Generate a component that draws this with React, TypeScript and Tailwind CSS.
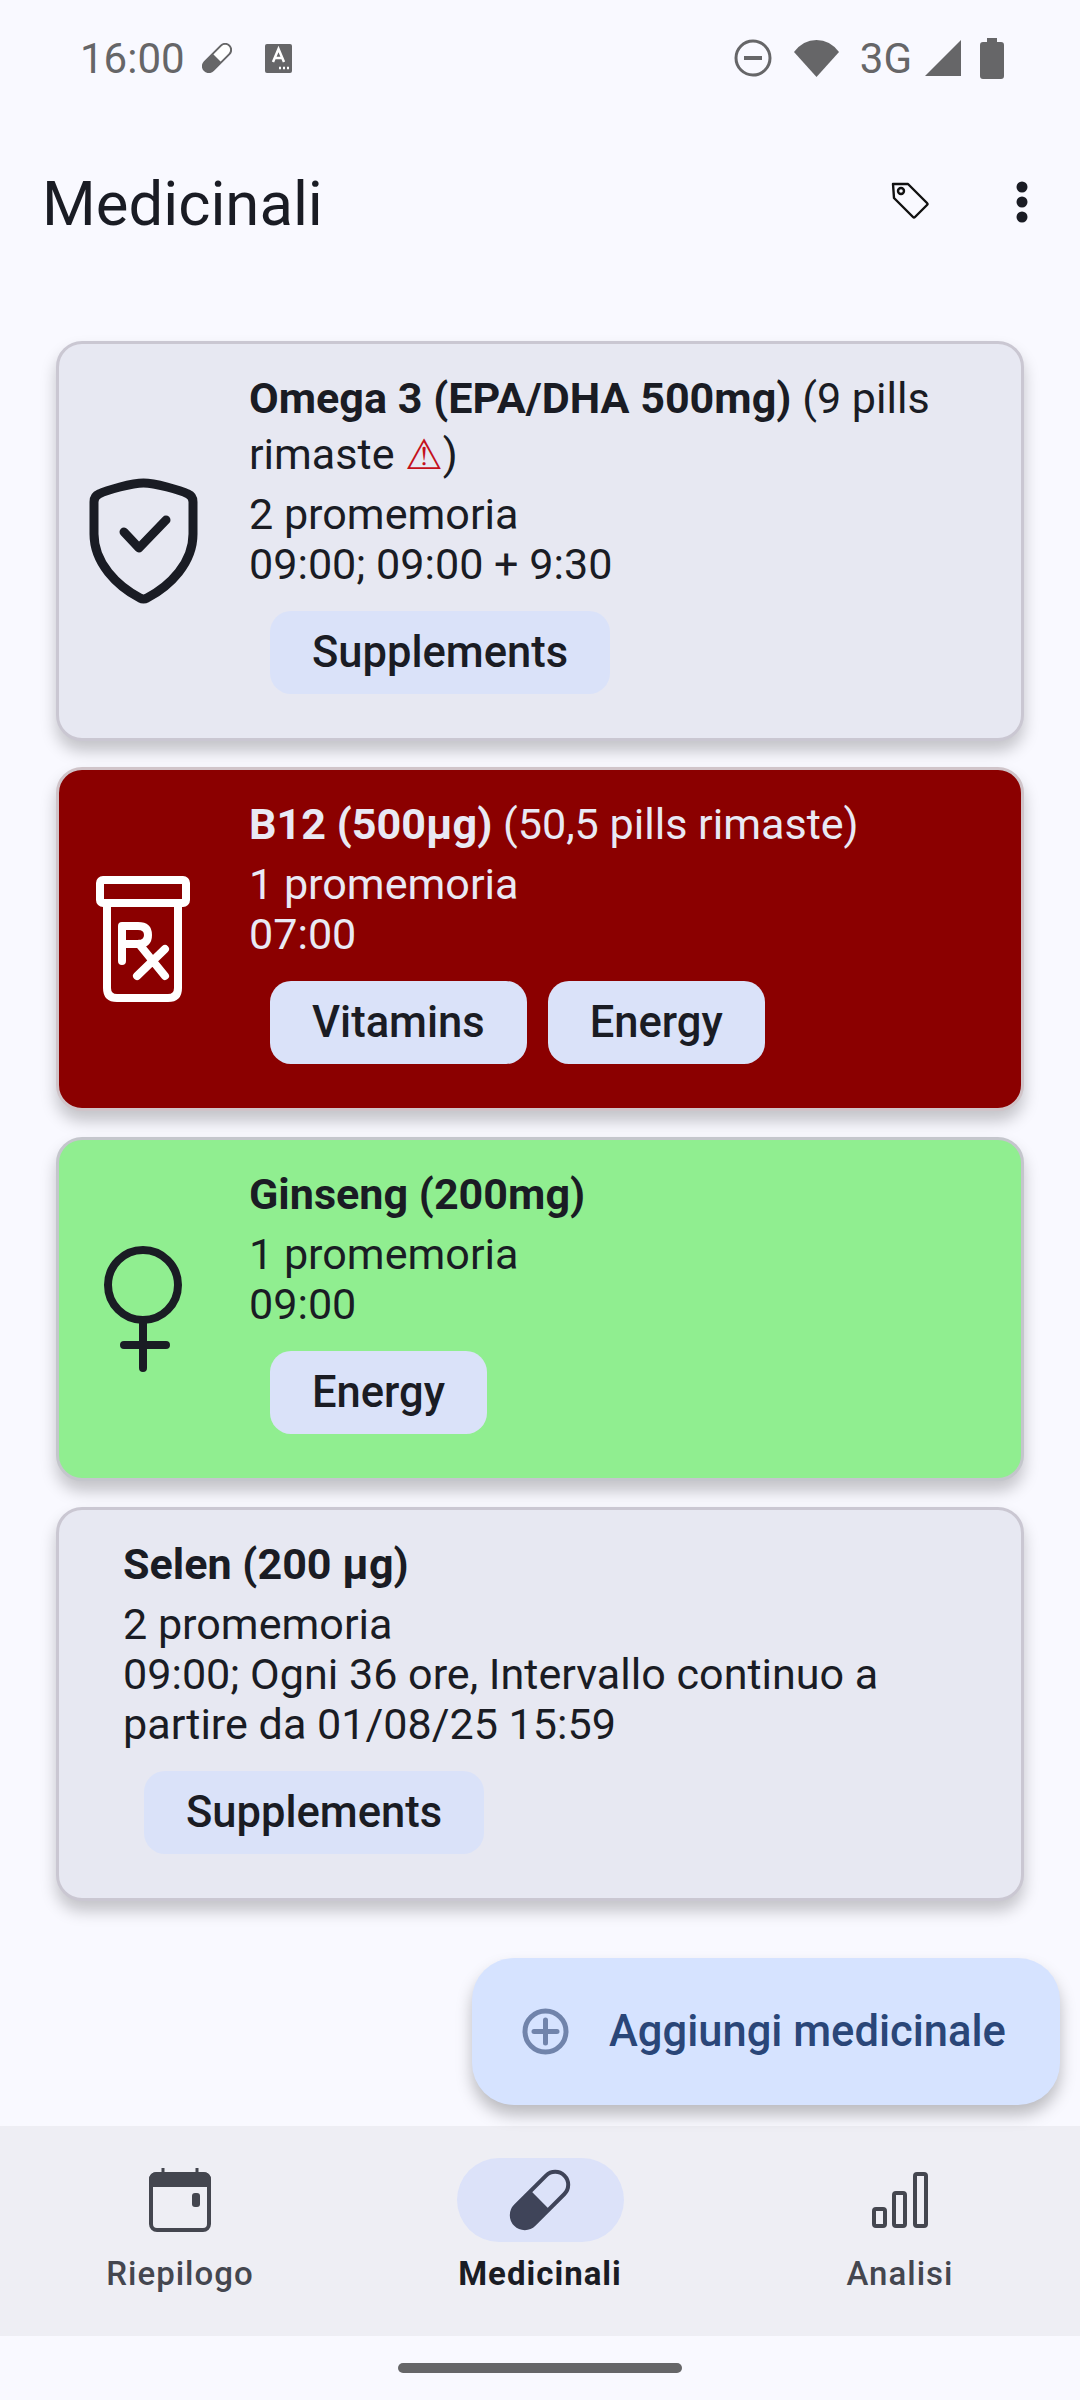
import React from "react";

const Shield = () => (
  <svg width="126" height="126" viewBox="0 0 126 126" fill="none" stroke="#1a1c24" strokeWidth="9" strokeLinecap="round" strokeLinejoin="round">
    <path d="M63.5 5C75 5 100 12 108 16Q113 18 113 24V56C113 85 90 108 67 120Q63.5 122 60 120C37 108 14 85 14 56V24Q14 18 19 16C27 12 52 5 63.5 5Z" />
    <path d="M44 54L59 70L86 42" />
  </svg>
);
const Rx = () => (
  <svg width="126" height="126" viewBox="0 0 126 126" fill="none" stroke="#ffffff" strokeWidth="8" strokeLinecap="round" strokeLinejoin="round">
    <rect x="20" y="4" width="86" height="23" rx="3" />
    <path d="M27 27V112Q27 122 37 122H88Q98 122 98 112V27" />
    <path d="M42 85V50H58Q68 50 68 59Q68 68 58 68H42" />
    <path d="M59 68L85 100M85 73L57 100" />
  </svg>
);
const Venus = () => (
  <svg width="126" height="126" viewBox="0 0 126 126" fill="none" stroke="#1a1c24" strokeWidth="8" strokeLinecap="round">
    <circle cx="63" cy="39" r="35" />
    <path d="M63 74V122M44 99H86" />
  </svg>
);

const Chip = ({ label }: { label: string }) => (
  <span className="flex h-[83px] items-center rounded-[21px] bg-[#dae2f9] px-[42px] text-[43.5px] font-medium text-[#1a1c24]">{label}</span>
);

type CardProps = {
  icon?: React.ReactNode;
  bg: string;
  title: string;
  extra?: React.ReactNode;
  lines: string[];
  chips: string[];
};

function Card({ icon, bg, title, extra, lines, chips }: CardProps) {
  return (
    <div className={`flex items-center rounded-[26px] border-[3px] shadow-[0_10px_16px_rgba(0,0,0,0.22)] ${bg} ${icon ? "pl-[21px]" : "pl-[64px]"} pr-[24px] pt-[27px] pb-[44px]`}>
      {icon && <div className="mt-[16px] mr-[43px] flex w-[126px] shrink-0 justify-center">{icon}</div>}
      <div className="min-w-0 flex-1">
        <div className="text-[43.1px] leading-[56px]">
          <span className="font-bold">{title}</span>
          {extra}
        </div>
        <div className="mt-[7px] text-[43.1px] leading-[50px] font-normal">
          {lines.map((l) => (
            <div key={l}>{l}</div>
          ))}
        </div>
        <div className="mt-[21px] ml-[21px] flex gap-[21px]">
          {chips.map((c) => (
            <Chip key={c} label={c} />
          ))}
        </div>
      </div>
    </div>
  );
}

export default function App() {
  return (
    <div className="relative flex h-[2400px] w-[1080px] flex-col overflow-hidden bg-[#f9f9ff] font-['Roboto',sans-serif] text-[#1a1c24]">
      {/* status bar */}
      <div className="flex h-[116px] shrink-0 items-center pr-[76px] pl-[80px] text-[#666668]">
        <span className="mt-[2px] text-[42px] leading-none">16:00</span>
        <svg className="ml-[17px]" width="30" height="30" viewBox="0 0 30 30">
          <g transform="rotate(45 15 15)">
            <rect x="9" y="-2.5" width="12" height="35" rx="6" fill="#fff" stroke="#666668" strokeWidth="2" />
            <path d="M9 15H21V26.5A6 6 0 0 1 9 26.5Z" fill="#666668" />
          </g>
        </svg>
        <svg className="ml-[33px]" width="27" height="29" viewBox="0 0 27 29">
          <rect width="27" height="29" rx="2" fill="#666668" />
          <path d="M8 18L13.5 5L19 18M10 14H17" stroke="#fff" strokeWidth="2.5" fill="none" />
          <path d="M14 24H16M18 24H20M22 24H24" stroke="#fff" strokeWidth="2.5" />
        </svg>
        <div className="flex-1" />
        <svg width="38" height="38" viewBox="0 0 38 38" fill="none" stroke="#666668" strokeWidth="3">
          <circle cx="19" cy="19" r="17" />
          <path d="M10 19H28" strokeWidth="4" />
        </svg>
        <svg className="ml-[21px]" width="47" height="38" viewBox="0 0 47 38">
          <path d="M23.5 38L1 13Q10 1 23.5 1Q37 1 46 13Z" fill="#666668" />
        </svg>
        <span className="mt-[2px] ml-[20px] text-[42px] leading-none">3G</span>
        <svg className="ml-[12px]" width="38" height="38" viewBox="0 0 38 38">
          <path d="M37 1V37H1Z" fill="#666668" />
        </svg>
        <svg className="ml-[18px]" width="24" height="41" viewBox="0 0 24 41">
          <path d="M7 0H17V4H21Q24 4 24 7V38Q24 41 21 41H3Q0 41 0 38V7Q0 4 3 4H7Z" fill="#666668" />
        </svg>
      </div>

      {/* header */}
      <div className="flex h-[174px] shrink-0 items-center pr-[52px] pl-[42px]">
        <h1 className="mt-[4px] flex-1 text-[61.6px] leading-none font-normal text-[#1a1c24]">Medicinali</h1>
        <svg className="mr-[87px] mb-[6px]" width="38" height="38" viewBox="0 0 38 38" fill="none" stroke="#111" strokeWidth="2.4" strokeLinejoin="round">
          <path d="M2 3H17L36 22Q37 23 36 24L24 36Q23 37 22 36L3 17Z" />
          <circle cx="10" cy="10" r="3" />
        </svg>
        <svg width="12" height="42" viewBox="0 0 12 42" fill="#1a1c24" className="mb-[3px]">
          <circle cx="6" cy="6" r="5.5" />
          <circle cx="6" cy="21" r="5.5" />
          <circle cx="6" cy="36" r="5.5" />
        </svg>
      </div>

      {/* list */}
      <div className="flex flex-1 flex-col gap-[26px] px-[56px] pt-[51px]">
        <Card
          bg="border-[#cac7d2] bg-[#e7e8f2]"
          icon={<Shield />}
          title="Omega 3 (EPA/DHA 500mg)"
          extra={
            <span>
              {" "}(9 pills rimaste <span className="text-[#c4101c] font-['DejaVu_Sans',sans-serif] text-[42px]">⚠</span>)
            </span>
          }
          lines={["2 promemoria", "09:00; 09:00 + 9:30"]}
          chips={["Supplements"]}
        />
        <Card
          bg="border-[#d0c4c9] bg-[#8b0000] text-[#e9e9f4]"
          icon={<Rx />}
          title="B12 (500µg)"
          extra={<span> (50,5 pills rimaste)</span>}
          lines={["1 promemoria", "07:00"]}
          chips={["Vitamins", "Energy"]}
        />
        <Card
          bg="border-[#c4c6cc] bg-[#90ee90]"
          icon={<Venus />}
          title="Ginseng (200mg)"
          lines={["1 promemoria", "09:00"]}
          chips={["Energy"]}
        />
        <Card
          bg="border-[#cac7d2] bg-[#e7e8f2]"
          title="Selen (200 µg)"
          lines={["2 promemoria", "09:00; Ogni 36 ore, Intervallo continuo a partire da 01/08/25 15:59"]}
          chips={["Supplements"]}
        />
      </div>

      {/* FAB */}
      <div className="absolute top-[1958px] left-[472px] flex h-[147px] w-[588px] items-center rounded-[42px] bg-[#d6e3ff] pl-[50px] text-[#2a4678] shadow-[0_10px_16px_rgba(0,0,0,0.25)]">
        <svg width="47" height="47" viewBox="0 0 47 47" fill="none" stroke="#7184ab" strokeWidth="5">
          <circle cx="23.5" cy="23.5" r="20.5" />
          <path d="M23.5 12V35M12 23.5H35" strokeLinecap="round" />
        </svg>
        <span className="ml-[40px] text-[43.5px] font-medium">Aggiungi medicinale</span>
      </div>

      {/* bottom nav */}
      <div className="grid h-[210px] shrink-0 grid-cols-3 bg-[#eeeef4] pt-[32px]">
        <div className="flex flex-col items-center">
          <div className="flex h-[84px] items-center justify-center">
            <svg width="62" height="64" viewBox="0 0 62 64" fill="none">
              <rect x="2" y="6" width="58" height="56" rx="6" stroke="#44464f" strokeWidth="4" />
              <path d="M2 12Q2 6 8 6H54Q60 6 60 12V17H2Z" fill="#44464f" stroke="#44464f" strokeWidth="4" />
              <path d="M14 0V6M48 0V6" stroke="#44464f" strokeWidth="3" />
              <rect x="43" y="25" width="8" height="14" rx="3" fill="#44464f" />
            </svg>
          </div>
          <span className="mt-[12px] text-[33px] leading-[40px] font-medium tracking-[1px] text-[#44464f]">Riepilogo</span>
        </div>
        <div className="flex flex-col items-center">
          <div className="flex h-[84px] w-[167px] items-center justify-center rounded-[42px] bg-[#dce2f9]">
            <svg width="62" height="62" viewBox="0 0 62 62">
              <g transform="rotate(45 31 31)">
                <rect x="18" y="-3.5" width="26" height="69" rx="13" fill="#dce2f9" stroke="#3f4459" strokeWidth="4" />
                <path d="M17 31H45V52.5A14 14 0 0 1 17 52.5Z" fill="#3f4459" />
              </g>
            </svg>
          </div>
          <span className="mt-[12px] text-[33px] leading-[40px] font-bold tracking-[1px] text-[#1a1c24]">Medicinali</span>
        </div>
        <div className="flex flex-col items-center">
          <div className="flex h-[84px] items-center justify-center">
            <svg width="56" height="56" viewBox="0 0 56 56" fill="none" stroke="#44464f" strokeWidth="4">
              <rect x="2" y="37" width="11" height="17" rx="2" />
              <rect x="22" y="21" width="11" height="33" rx="2" />
              <rect x="43" y="2" width="11" height="52" rx="2" />
            </svg>
          </div>
          <span className="mt-[12px] text-[33px] leading-[40px] font-medium tracking-[1px] text-[#44464f]">Analisi</span>
        </div>
      </div>

      {/* gesture area */}
      <div className="flex h-[64px] shrink-0 items-start justify-center pt-[27px]">
        <div className="h-[10px] w-[284px] rounded-full bg-[#666668]" />
      </div>
    </div>
  );
}
